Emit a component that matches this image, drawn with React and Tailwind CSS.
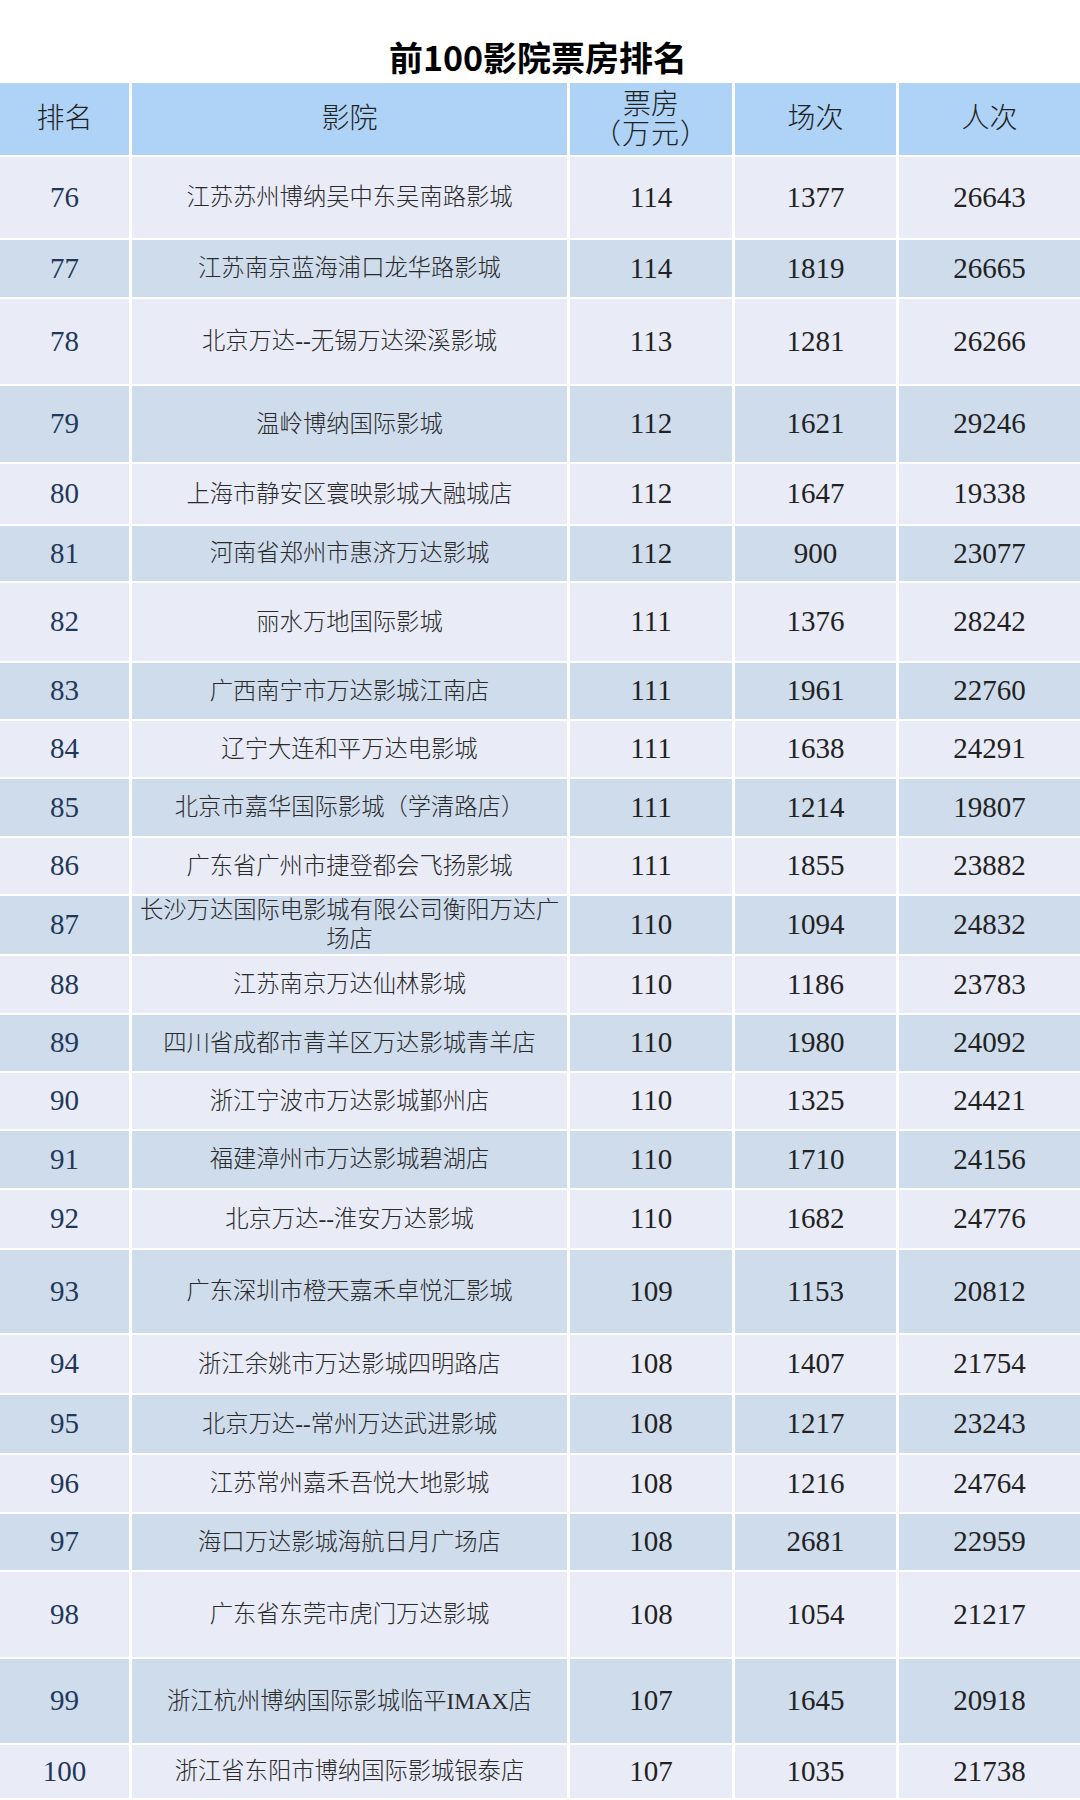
const rows = [
  { rank: 76, name: '江苏苏州博纳吴中东吴南路影城', box: 114, shows: 1377, people: 26643, h: 'h-[81px]' },
  { rank: 77, name: '江苏南京蓝海浦口龙华路影城', box: 114, shows: 1819, people: 26665, h: 'h-[57px]' },
  { rank: 78, name: '北京万达--无锡万达梁溪影城', box: 113, shows: 1281, people: 26266, h: 'h-[85px]' },
  { rank: 79, name: '温岭博纳国际影城', box: 112, shows: 1621, people: 29246, h: 'h-[76px]' },
  { rank: 80, name: '上海市静安区寰映影城大融城店', box: 112, shows: 1647, people: 19338, h: 'h-[60px]' },
  { rank: 81, name: '河南省郑州市惠济万达影城', box: 112, shows: 900, people: 23077, h: 'h-[55px]' },
  { rank: 82, name: '丽水万地国际影城', box: 111, shows: 1376, people: 28242, h: 'h-[78px]' },
  { rank: 83, name: '广西南宁市万达影城江南店', box: 111, shows: 1961, people: 22760, h: 'h-[56px]' },
  { rank: 84, name: '辽宁大连和平万达电影城', box: 111, shows: 1638, people: 24291, h: 'h-[56px]' },
  { rank: 85, name: '北京市嘉华国际影城（学清路店）', box: 111, shows: 1214, people: 19807, h: 'h-[57px]' },
  { rank: 86, name: '广东省广州市捷登都会飞扬影城', box: 111, shows: 1855, people: 23882, h: 'h-[56px]' },
  { rank: 87, name: ['长沙万达国际电影城有限公司衡阳万达广', '场店'], box: 110, shows: 1094, people: 24832, h: 'h-[58px]' },
  { rank: 88, name: '江苏南京万达仙林影城', box: 110, shows: 1186, people: 23783, h: 'h-[57px]' },
  { rank: 89, name: '四川省成都市青羊区万达影城青羊店', box: 110, shows: 1980, people: 24092, h: 'h-[56px]' },
  { rank: 90, name: '浙江宁波市万达影城鄞州店', box: 110, shows: 1325, people: 24421, h: 'h-[56px]' },
  { rank: 91, name: '福建漳州市万达影城碧湖店', box: 110, shows: 1710, people: 24156, h: 'h-[57px]' },
  { rank: 92, name: '北京万达--淮安万达影城', box: 110, shows: 1682, people: 24776, h: 'h-[58px]' },
  { rank: 93, name: '广东深圳市橙天嘉禾卓悦汇影城', box: 109, shows: 1153, people: 20812, h: 'h-[83px]' },
  { rank: 94, name: '浙江余姚市万达影城四明路店', box: 108, shows: 1407, people: 21754, h: 'h-[58px]' },
  { rank: 95, name: '北京万达--常州万达武进影城', box: 108, shows: 1217, people: 23243, h: 'h-[58px]' },
  { rank: 96, name: '江苏常州嘉禾吾悦大地影城', box: 108, shows: 1216, people: 24764, h: 'h-[57px]' },
  { rank: 97, name: '海口万达影城海航日月广场店', box: 108, shows: 2681, people: 22959, h: 'h-[56px]' },
  { rank: 98, name: '广东省东莞市虎门万达影城', box: 108, shows: 1054, people: 21217, h: 'h-[85px]' },
  { rank: 99, name: '浙江杭州博纳国际影城临平IMAX店', box: 107, shows: 1645, people: 20918, h: 'h-[84px]' },
  { rank: 100, name: '浙江省东阳市博纳国际影城银泰店', box: 107, shows: 1035, people: 21738, h: 'h-[53px]' },
]

const cols = 'grid grid-cols-[129px_435px_162px_161px_181px] gap-x-[3px]'
const serif = "font-['Liberation_Serif','Noto_Sans_CJK_SC',serif]"

function Cell({ className = '', children }) {
  return (
    <div className={`flex items-center justify-center text-center ${className}`}>
      {children}
    </div>
  )
}

export default function App() {
  return (
    <div className="w-[1080px] min-h-[1800px] bg-white">
      <div className="h-[83px] flex items-end justify-center pb-[6px] pr-[4px]">
        <h1 className="text-[34px] leading-[41px] font-bold text-black font-['Noto_Sans_CJK_SC',sans-serif]">
          前100影院票房排名
        </h1>
      </div>

      <div className="flex flex-col gap-y-[2px] w-[1080px]">
        <div className={`${cols} h-[72px] text-[28px] font-light text-[#222] ${serif}`}>
          <Cell className="bg-[#aed3f6]">排名</Cell>
          <Cell className="bg-[#aed3f6]">影院</Cell>
          <Cell className="bg-[#aed3f6] flex-col leading-[30px] pt-[2px]">
            <span>票房</span>
            <span className="tracking-[1px]">（万元）</span>
          </Cell>
          <Cell className="bg-[#aed3f6]">场次</Cell>
          <Cell className="bg-[#aed3f6]">人次</Cell>
        </div>

        {rows.map((r) => {
          const bg = r.rank % 2 === 1 ? 'bg-[#cfdcec]' : 'bg-[#e9ecf6]'
          return (
            <div key={r.rank} className={`${cols} ${r.h} ${serif}`}>
              <Cell className={`${bg} text-[29px] text-[#22385a]`}>{r.rank}</Cell>
              <Cell className={`${bg} text-[23.3px] font-light text-[#2a2a2a] overflow-hidden`}>
                {Array.isArray(r.name) ? (
                  <div className="w-full flex flex-col leading-[29px] whitespace-nowrap">
                    <span className="pl-[8px] text-left">{r.name[0]}</span>
                    <span className="text-center">{r.name[1]}</span>
                  </div>
                ) : (
                  <span className="whitespace-nowrap">{r.name}</span>
                )}
              </Cell>
              <Cell className={`${bg} text-[29px] text-[#222]`}>{r.box}</Cell>
              <Cell className={`${bg} text-[29px] text-[#222]`}>{r.shows}</Cell>
              <Cell className={`${bg} text-[29px] text-[#222]`}>{r.people}</Cell>
            </div>
          )
        })}
      </div>
    </div>
  )
}
